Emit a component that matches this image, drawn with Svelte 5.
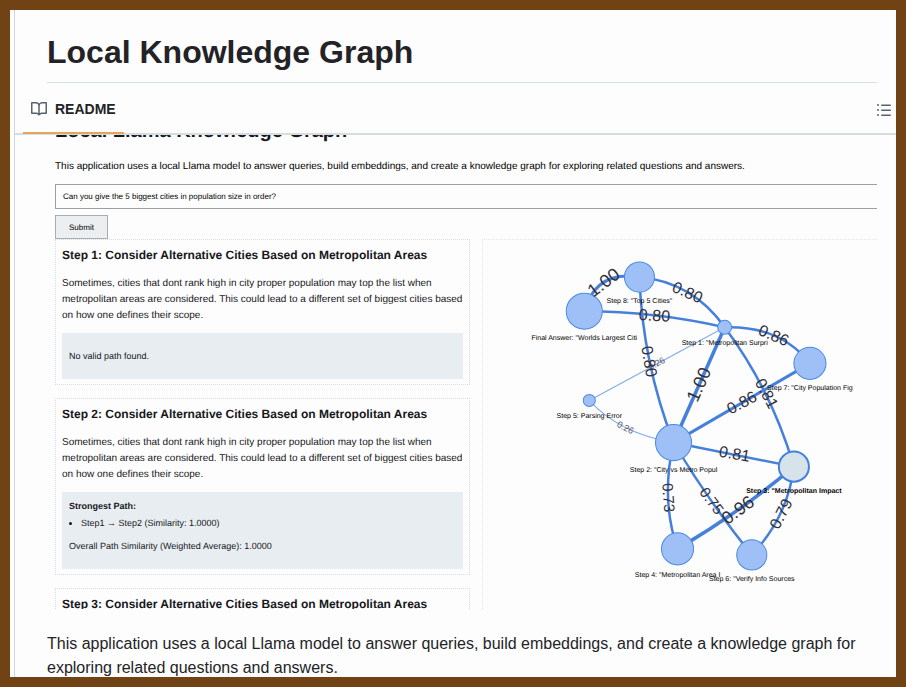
<script>
  const cardText =
    'Sometimes, cities that dont rank high in city proper population may top the list when metropolitan areas are considered. This could lead to a different set of biggest cities based on how one defines their scope.';
  const cardTitle = 'Consider Alternative Cities Based on Metropolitan Areas';

  let query = $state('Can you give the 5 biggest cities in population size in order?');

  const nodes = [
    { x: 157, y: 38, r: 15, label: 'Step 8: "Top 5 Cities"', dy: 26 },
    { x: 102, y: 72, r: 18, label: 'Final Answer: "Worlds Largest Citi', dy: 29 },
    { x: 242, y: 88, r: 7, label: 'Step 1: "Metropolitan Surpri', dy: 18 },
    { x: 327, y: 124, r: 16, label: 'Step 7: "City Population Fig', dy: 27 },
    { x: 107, y: 161, r: 6, label: 'Step 5: Parsing Error', dy: 17 },
    { x: 191, y: 203, r: 18, label: 'Step 2: "City vs Metro Popul', dy: 29 },
    { x: 311, y: 227, r: 15, label: 'Step 3: "Metropolitan Impact', dy: 26, active: true },
    { x: 195, y: 309, r: 16, label: 'Step 4: "Metropolitan Area I', dy: 28 },
    { x: 269, y: 315, r: 15, label: 'Step 6: "Verify Info Sources', dy: 26 }
  ];

  const edges = [
    { d: 'M107 161L242 88', w: 1, v: '0.26', x: 174, y: 124, a: -28, s: 9 },
    { d: 'M107 161Q137 194 191 203', w: 1, v: '0.26', x: 143, y: 188, a: 27, s: 9 },
    { d: 'M102 72Q114 31 157 38', w: 3, v: '1.00', x: 121, y: 43, a: -37, s: 18 },
    { d: 'M157 38Q210 43 242 88', w: 2.5, v: '0.80', x: 205, y: 53, a: 24, s: 16 },
    { d: 'M102 72Q172 72 242 88', w: 2.5, v: '0.80', x: 172, y: 76, a: 3, s: 16 },
    { d: 'M157 38Q160 123 191 203', w: 2.5, v: '0.80', x: 167, y: 122, a: 80, s: 16 },
    { d: 'M242 88L191 203', w: 3.5, v: '1.00', x: 216, y: 145, a: -66, s: 18 },
    { d: 'M242 88Q297 86 327 124', w: 2.5, v: '0.86', x: 291, y: 96, a: 23, s: 16 },
    { d: 'M327 124L191 203', w: 3, v: '0.86', x: 259, y: 163, a: -28, s: 16 },
    { d: 'M242 88Q289 151 311 227', w: 2.5, v: '0.81', x: 284, y: 154, a: 62, s: 16 },
    { d: 'M191 203L311 227', w: 2.5, v: '0.81', x: 252, y: 214, a: 10, s: 16 },
    { d: 'M191 203Q178 260 195 309', w: 2.5, v: '0.73', x: 186, y: 258, a: 86, s: 15 },
    { d: 'M191 203Q227 263 269 315', w: 2.5, v: '0.75', x: 229, y: 261, a: 53, s: 15 },
    { d: 'M311 227Q258 272 195 309', w: 3.5, v: '0.96', x: 255, y: 270, a: -36, s: 18 },
    { d: 'M311 227Q305 277 269 315', w: 2.5, v: '0.79', x: 298, y: 274, a: -63, s: 16 }
  ];
</script>

<div class="frame">
  <main class="page">
    <header class="title"><h1>Local Knowledge Graph</h1></header>

    <nav class="bar">
      <a class="tab" href="#readme">
        <svg width="16" height="16" viewBox="0 0 16 16" fill="#59636e" aria-hidden="true">
          <path d="M0 1.75A.75.75 0 0 1 .75 1h4.253c1.227 0 2.317.59 3 1.501A3.743 3.743 0 0 1 11.006 1h4.245a.75.75 0 0 1 .75.75v10.5a.75.75 0 0 1-.75.75h-4.507a2.25 2.25 0 0 0-1.591.659l-.622.621a.75.75 0 0 1-1.06 0l-.622-.621A2.25 2.25 0 0 0 5.258 13H.75a.75.75 0 0 1-.75-.75Zm7.251 10.324.004-5.073-.002-2.253A2.25 2.25 0 0 0 5.003 2.5H1.5v9h3.757a3.75 3.75 0 0 1 1.994.574ZM8.755 4.75l-.004 7.322a3.752 3.752 0 0 1 1.992-.572H14.5v-9h-3.495a2.25 2.25 0 0 0-2.25 2.25Z" />
        </svg>
        <span>README</span>
      </a>
      <button class="outline" aria-label="Outline">
        <svg width="16" height="16" viewBox="0 0 16 16" fill="#59636e" aria-hidden="true">
          <path d="M5.75 2.5h8.5a.75.75 0 0 1 0 1.5h-8.5a.75.75 0 0 1 0-1.5Zm0 5h8.5a.75.75 0 0 1 0 1.5h-8.5a.75.75 0 0 1 0-1.5Zm0 5h8.5a.75.75 0 0 1 0 1.5h-8.5a.75.75 0 0 1 0-1.5ZM2 14a1 1 0 1 1 0-2 1 1 0 0 1 0 2Zm1-6a1 1 0 1 1-2 0 1 1 0 0 1 2 0ZM2 4a1 1 0 1 1 0-2 1 1 0 0 1 0 2Z" />
        </svg>
      </button>
    </nav>

    <article id="readme">
      <section class="demo">
        <h2>Local Llama Knowledge Graph</h2>
        <p class="intro">
          This application uses a local Llama model to answer queries, build embeddings, and create a knowledge graph for
          exploring related questions and answers.
        </p>
        <input type="text" aria-label="Query" bind:value={query} />
        <button class="submit">Submit</button>

        <div class="columns">
          <div class="steps">
            <section class="card">
              <h3>Step 1: {cardTitle}</h3>
              <p>{cardText}</p>
              <div class="panel"><p class="none">No valid path found.</p></div>
            </section>
            <section class="card">
              <h3>Step 2: {cardTitle}</h3>
              <p>{cardText}</p>
              <div class="panel">
                <strong>Strongest Path:</strong>
                <ul><li>Step1 → Step2 (Similarity: 1.0000)</li></ul>
                <p class="overall">Overall Path Similarity (Weighted Average): 1.0000</p>
              </div>
            </section>
            <section class="card">
              <h3>Step 3: {cardTitle}</h3>
            </section>
          </div>

          <div class="graph">
            <svg viewBox="1 1 393 368" role="img" aria-label="Knowledge graph">
              {#each edges as e}
                <path class="edge" class:thin={e.w === 1} d={e.d} stroke-width={e.w} />
              {/each}
              {#each nodes as n}
                <circle class="node" class:active={n.active} cx={n.x} cy={n.y} r={n.r} />
              {/each}
              {#each edges as e}
                <text
                  class="weight"
                  class:faint={e.w === 1}
                  font-size={e.s}
                  dy="0.35em"
                  transform="translate({e.x} {e.y}) rotate({e.a})">{e.v}</text>
              {/each}
              {#each nodes as n}
                <text class="name" class:active={n.active} x={n.x} y={n.y + n.dy}>{n.label}</text>
              {/each}
            </svg>
          </div>
        </div>
      </section>

      <p class="about">
        This application uses a local Llama model to answer queries, build embeddings, and create a knowledge graph for
        exploring related questions and answers.
      </p>
    </article>
  </main>
</div>

<style>
  :global(body) {
    margin: 0;
  }
  .frame {
    box-sizing: border-box;
    height: 100vh;
    padding-left: 4px;
    border: 10px solid #704214;
    background: #fdfdfd;
    overflow: hidden;
    font-family: 'Liberation Sans', Arial, sans-serif;
    color: #232327;
  }
  .page {
    min-height: 100%;
    border-left: 1px solid #cdd6dc;
  }
  h1,
  h2,
  h3,
  p,
  ul {
    margin: 0;
  }
  .title {
    margin: 0 19px 0 32px;
    padding: 22px 0 10px;
    border-bottom: 1px solid #d5e1e8;
  }
  h1 {
    font-size: 32px;
    line-height: 40px;
  }
  .bar {
    display: flex;
    align-items: stretch;
    justify-content: space-between;
    height: 50px;
    padding: 0 4px 0 8px;
    border-bottom: 2px solid #d3dde2;
  }
  .tab {
    display: flex;
    align-items: center;
    gap: 8px;
    padding: 3px 8px 0;
    margin-bottom: -1px;
    border-bottom: 2px solid #e8a35c;
    color: #232327;
    font-size: 14px;
    font-weight: 700;
    text-decoration: none;
  }
  .outline {
    align-self: center;
    display: flex;
    padding: 0;
    border: 0;
    background: none;
    margin-top: 4px;
  }
  #readme {
    padding: 0 19px 0 32px;
  }
  .demo {
    box-sizing: border-box;
    aspect-ratio: 830 / 474;
    padding-left: 8px;
    overflow: hidden;
    color: #17171c;
    font-size: 10px;
    line-height: 16px;
    text-rendering: geometricPrecision;
  }
  h2 {
    margin: -16px 0 16px;
    font-size: 20px;
    line-height: 24px;
  }
  .intro {
    white-space: nowrap;
    color: #000;
  }
  input {
    display: block;
    box-sizing: border-box;
    width: calc(100% + 16px);
    height: 25px;
    margin: 9px 0 6px;
    padding: 0 7px;
    border: 1px solid #9c9fa2;
    background: #fdfdfd;
    color: #000;
    font: 8px 'Liberation Sans', Arial, sans-serif;
    text-rendering: inherit;
  }
  .submit {
    display: block;
    height: 24px;
    padding: 0 13px;
    border: 1px solid #a9aeb2;
    background: #ebeff1;
    color: #000;
    font: 8px 'Liberation Sans', Arial, sans-serif;
    text-rendering: inherit;
  }
  .columns {
    display: grid;
    grid-template-columns: 21fr 20fr;
    gap: 12px;
  }
  .steps {
    display: flex;
    flex-direction: column;
    gap: 13px;
  }
  .card {
    padding: 7px 6px 5px;
    border: 1px dotted #d6dcdf;
  }
  h3 {
    margin-bottom: 13px;
    font-size: 12px;
    line-height: 16px;
  }
  .panel {
    margin-top: 9px;
    padding: 8px 7px;
    background: #e7edf0;
    font-size: 9px;
    line-height: 12px;
  }
  .none {
    margin: 9px 0;
  }
  .panel strong {
    display: block;
  }
  .panel ul {
    margin: 5px 0 11px;
    padding-left: 12px;
  }
  .overall {
    margin-bottom: 9px;
  }
  .graph {
    border: 1px dotted #e0e5e7;
    border-right: 0;
  }
  .graph svg {
    display: block;
    width: 100%;
  }
  .edge {
    fill: none;
    stroke: #4680da;
  }
  .edge.thin {
    stroke: #7eaaea;
  }
  .node {
    fill: #9fbff7;
    stroke: #4b8ae0;
    stroke-width: 1;
  }
  .node.active {
    fill: #d6e3ea;
    stroke: #4480dc;
    stroke-width: 2;
  }
  .weight {
    fill: #343038;
    text-anchor: middle;
  }
  .weight.faint {
    fill: #55555c;
  }
  .name {
    fill: #000;
    font-size: 7px;
    text-anchor: middle;
  }
  .name.active {
    font-weight: 700;
  }
  .about {
    margin-top: 23px;
    font-size: 16px;
    line-height: 24px;
  }
</style>
